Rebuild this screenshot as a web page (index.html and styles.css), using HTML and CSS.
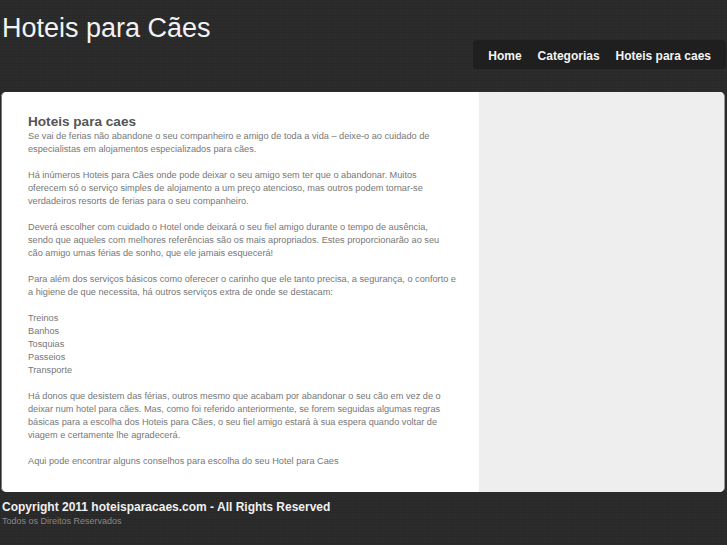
FILE: index.html
```html
<!DOCTYPE html>
<html lang="pt">
<head>
<meta charset="utf-8">
<title>Hoteis para Cães</title>
<link rel="stylesheet" href="styles.css">
</head>
<body>
<div class="header">
  <h1 class="logo">Hoteis para Cães</h1>
  <ul class="nav">
    <li><a href="#">Home</a></li>
    <li><a href="#">Categorias</a></li>
    <li><a href="#">Hoteis para caes</a></li>
  </ul>
</div>
<div class="wrap">
  <div class="content">
    <h2>Hoteis para caes</h2>
    <p>Se vai de ferias não abandone o seu companheiro e amigo de toda a vida – deixe-o ao cuidado de<br>especialistas em alojamentos especializados para cães.</p>
    <p>Há inúmeros Hoteis para Cães onde pode deixar o seu amigo sem ter que o abandonar. Muitos<br>oferecem só o serviço simples de alojamento a um preço atencioso, mas outros podem tornar-se<br>verdadeiros resorts de ferias para o seu companheiro.</p>
    <p>Deverá escolher com cuidado o Hotel onde deixará o seu fiel amigo durante o tempo de ausência,<br>sendo que aqueles com melhores referências são os mais apropriados. Estes proporcionarão ao seu<br>cão amigo umas férias de sonho, que ele jamais esquecerá!</p>
    <p>Para além dos serviços básicos como oferecer o carinho que ele tanto precisa, a segurança, o conforto e<br>a higiene de que necessita, há outros serviços extra de onde se destacam:</p>
    <p>Treinos<br>Banhos<br>Tosquias<br>Passeios<br>Transporte</p>
    <p>Há donos que desistem das férias, outros mesmo que acabam por abandonar o seu cão em vez de o<br>deixar num hotel para cães. Mas, como foi referido anteriormente, se forem seguidas algumas regras<br>básicas para a escolha dos Hoteis para Cães, o seu fiel amigo estará à sua espera quando voltar de<br>viagem e certamente lhe agradecerá.</p>
    <p>Aqui pode encontrar alguns conselhos para escolha do seu Hotel para Caes</p>
  </div>
  <div class="sidebar"></div>
</div>
<div class="footer">
  <p class="copy">Copyright 2011 hoteisparacaes.com - All Rights Reserved</p>
  <p class="rights">Todos os Direitos Reservados</p>
</div>
</body>
</html>
```
FILE: styles.css
```css
html, body {
  margin: 0;
  padding: 0;
}
body {
  background-color: #2a2a2a;
  background-image: repeating-linear-gradient(0deg, rgba(255,255,255,0.015) 0 1px, transparent 1px 3px), repeating-linear-gradient(90deg, rgba(0,0,0,0.06) 0 1px, transparent 1px 3px);
  font-family: "Liberation Sans", Arial, sans-serif;
  height: 545px;
  overflow: hidden;
}
.header {
  display: flex;
  justify-content: space-between;
  align-items: flex-start;
  height: 92px;
}
.logo {
  margin: 12px 0 0 2px;
  font-size: 27px;
  font-weight: normal;
  color: #f2f2f2;
  line-height: 32px;
}
.nav {
  list-style: none;
  margin: 40px 1px 0 0;
  padding: 0 15px 0 15px;
  height: 29px;
  display: flex;
  align-items: center;
  gap: 16px;
  background: #1f1f1f;
  border-radius: 4px;
}
.nav a {
  color: #f4f4f4;
  text-decoration: none;
  font-weight: bold;
  font-size: 12px;
}
.wrap {
  display: flex;
  margin: 0 2px 0 1px;
  height: 400px;
  border-radius: 5px;
  overflow: hidden;
  background: #eeeeee;
  border-right: 1px solid #999;
}
.content {
  width: 432px;
  background: #ffffff;
  padding: 16px 19px 0 26px;
  border-radius: 5px 0 0 5px;
  border-left: 1px solid #777;
}
.sidebar {
  flex: 1;
  background: #eeeeee;
}
.content h2 {
  margin: 6px 0 0 0;
  font-size: 13.6px;
  line-height: 16px;
  color: #555555;
}
.content p {
  margin: 0 0 13px 0;
  font-size: 9.2px;
  line-height: 13px;
  color: #777777;
}
.footer {
  padding: 8px 0 0 2px;
}
.copy {
  margin: 0;
  font-size: 12px;
  font-weight: bold;
  color: #f0f0f0;
  line-height: 15px;
}
.rights {
  margin: 0;
  font-size: 9px;
  color: #888888;
  line-height: 12px;
}
```
